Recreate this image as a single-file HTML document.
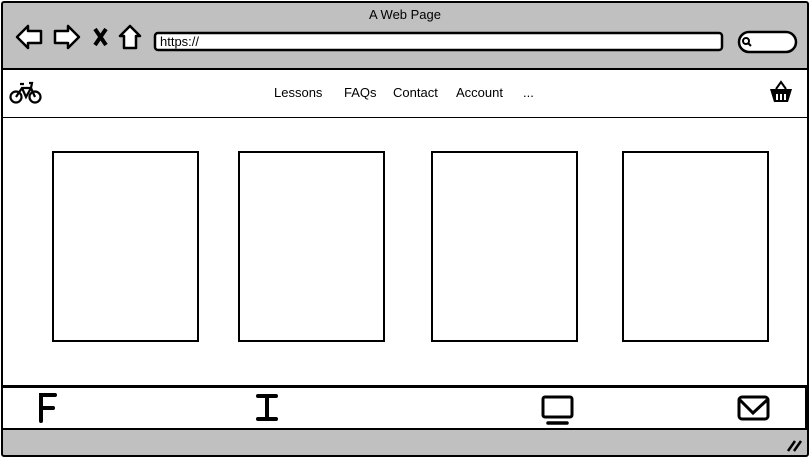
<!DOCTYPE html>
<html><head><style>
*{margin:0;padding:0;box-sizing:border-box}
body{width:810px;height:458px;background:#fff;position:relative;overflow:hidden;font-family:"Liberation Sans",sans-serif;color:#000}
.a{position:absolute}
.b{border:2px solid #000}
</style></head><body>
<div class="a b" style="left:1px;top:1px;width:808px;height:456px;background:#c0c0c0;border-radius:3px"></div>
<div class="a" style="left:0;top:7px;width:810px;text-align:center;font-size:13px">A Web Page</div>
<svg class="a" style="left:0;top:0" width="810" height="68">
<g fill="#fff" stroke="#000" stroke-width="2.5" stroke-linejoin="round">
<path d="M17 37 L28 26 L28 31 L41 31 L41 43 L28 43 L28 48 Z"/>
<path d="M79 37 L68 26 L68 31 L55 31 L55 43 L68 43 L68 48 Z"/>
<path d="M130 26 L120 36 L124 36 L124 48 L136 48 L136 36 L140 36 Z"/>
</g>
<path d="M95 29 L106 45 M106 29 L95 45" stroke="#000" stroke-width="4"/>
<rect x="155" y="33" width="567" height="17" rx="3" fill="#fff" stroke="#000" stroke-width="2.5"/>
<rect x="739" y="32" width="57" height="20" rx="10" fill="#fff" stroke="#000" stroke-width="2.5"/>
<circle cx="746" cy="41" r="3" fill="none" stroke="#000" stroke-width="2"/><path d="M748 43 L751 46" stroke="#000" stroke-width="2"/>
</svg>
<div class="a" style="left:160px;top:34px;font-size:13px">https://</div>
<div class="a b" style="left:1px;top:68px;width:808px;height:51px;background:#fff"></div>
<svg class="a" style="left:9px;top:80px" width="34" height="26" fill="none" stroke="#000" stroke-width="2.2">
<circle cx="7" cy="17" r="5.5"/><circle cx="26" cy="17" r="5.5"/>
<path d="M7 17 L13 8 L22 8 L26 17 M13 8 L17 17 L22 8 M11 4 L15 4 M20 3 L23 3 L22 8"/>
</svg>
<div class="a" style="left:274px;top:85px;font-size:13px">Lessons</div>
<div class="a" style="left:344px;top:85px;font-size:13px">FAQs</div>
<div class="a" style="left:393px;top:85px;font-size:13px">Contact</div>
<div class="a" style="left:456px;top:85px;font-size:13px">Account</div>
<div class="a" style="left:523px;top:85px;font-size:13px">...</div>
<svg class="a" style="left:768px;top:80px" width="28" height="26">
<path d="M8 9 L13 2 L18 9" fill="none" stroke="#000" stroke-width="2"/>
<path d="M2 9 L24 9 L20 22 L6 22 Z" fill="#000"/>
<path d="M9 14 V20 M13 14 V20 M17 14 V20" stroke="#fff" stroke-width="2"/>
</svg>
<div class="a b" style="left:1px;top:118px;width:808px;height:269px;background:#fff;border-top:none"></div>
<div class="a b" style="left:52px;top:151px;width:147px;height:191px"></div>
<div class="a b" style="left:238px;top:151px;width:147px;height:191px"></div>
<div class="a b" style="left:431px;top:151px;width:147px;height:191px"></div>
<div class="a b" style="left:622px;top:151px;width:147px;height:191px"></div>
<div class="a b" style="left:1px;top:386px;width:806px;height:44px;background:#fff"></div>
<svg class="a" style="left:0;top:386px" width="810" height="44">
<path d="M41 35 V9 H55 M41 22 H53" fill="none" stroke="#000" stroke-width="4" stroke-linecap="round"/>
<path d="M258 10 H276 M258 33 H276 M267 10 V33" fill="none" stroke="#000" stroke-width="4" stroke-linecap="round"/>
<rect x="543" y="11" width="29" height="20" rx="2" fill="#fff" stroke="#000" stroke-width="3"/>
<path d="M548 37 H567" stroke="#000" stroke-width="3.5" stroke-linecap="round"/>
<rect x="739" y="11" width="29" height="22" rx="3" fill="#fff" stroke="#000" stroke-width="3"/>
<path d="M740 14 L753 27 L767 14" fill="none" stroke="#000" stroke-width="3"/>
</svg>
<svg class="a" style="left:786px;top:437px" width="20" height="16"><path d="M2 14 L9 4 M8 14 L15 4" stroke="#000" stroke-width="2.5"/></svg>
</body></html>
